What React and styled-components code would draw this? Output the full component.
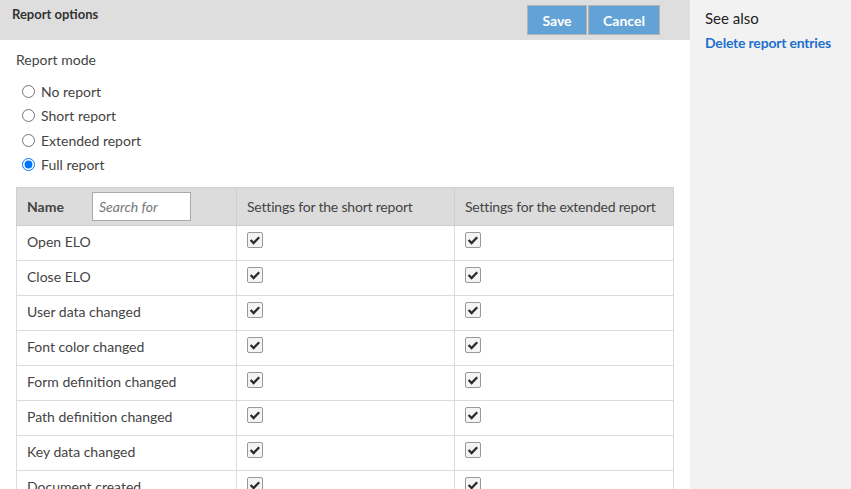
import React from 'react';
import styled, { createGlobalStyle } from 'styled-components';

const GlobalStyle = createGlobalStyle`
    body {
        margin: 0;
        font-family: Lato, "Open Sans", sans-serif;
        color: #333;
        overflow: hidden;
    }
`;

const Page = styled.div`
    display: flex;
    width: 851px;
    height: 489px;
    overflow: hidden;
`;

const Main = styled.div`
    width: 690px;
    flex-shrink: 0;
    background: #fff;
`;

const Header = styled.div`
    height: 40px;
    background: #dedede;
    display: flex;
    justify-content: space-between;
    align-items: flex-start;
    padding: 0 30px 0 12px;
`;

const Title = styled.div`
    font-size: 13px;
    font-weight: bold;
    color: #333;
    padding-top: 6px;
`;

const Buttons = styled.div`
    display: flex;
    gap: 1px;
    padding-top: 5px;
`;

const Button = styled.button`
    height: 30px;
    width: ${(p) => p.w}px;
    background: #62a2d6;
    border: 1px solid #b3b3b3;
    color: #fff;
    font-family: Lato, sans-serif;
    font-weight: bold;
    font-size: 14px;
    padding: 0;
`;

const Content = styled.div`
    padding: 11px 17px 0 16px;
`;

const Label = styled.div`
    font-size: 14px;
    color: #444;
    margin-bottom: 14px;
`;

const RadioList = styled.div`
    display: flex;
    flex-direction: column;
    gap: 6px;
    padding-left: 6px;
    margin-bottom: 13px;
`;

const RadioRow = styled.label`
    display: flex;
    align-items: center;
    gap: 6px;
    font-size: 14px;
    color: #444;
    height: 18.5px;

    input {
        margin: 0;
        width: 13px;
        height: 13px;
    }
`;

const Table = styled.table`
    width: 657px;
    table-layout: fixed;
    border-collapse: collapse;
    font-size: 14px;
    color: #444;
`;

const Th = styled.th`
    background: #dcdcdc;
    border: 1px solid #cfcfcf;
    height: 37px;
    padding: 0 10px;
    text-align: left;
    white-space: nowrap;
    overflow: hidden;
    font-weight: ${(p) => (p.bold ? 'bold' : 'normal')};
    letter-spacing: ${(p) => (p.tight ? '-0.2px' : 'normal')};
`;

const NameHead = styled.div`
    display: flex;
    align-items: center;
`;

const Search = styled.input`
    width: 99px;
    height: 29px;
    box-sizing: border-box;
    border: 1px solid #aaa;
    padding: 0 6px;
    font-family: Lato, sans-serif;
    font-size: 14px;
    margin-left: auto;
    margin-right: 35px;

    &::placeholder {
        font-style: italic;
        color: #777;
    }
`;

const Td = styled.td`
    border: 1px solid #dcdcdc;
    height: 34px;
    padding: 0 10px;
    vertical-align: top;
    line-height: 32px;
`;

const Box = styled.span`
    display: inline-block;
    width: 16px;
    height: 16px;
    box-sizing: border-box;
    border: 1px solid #999;
    border-radius: 2px;
    background: #f4f4f4;
    margin-top: 6px;
    vertical-align: top;

    svg {
        display: block;
    }
`;

const Sidebar = styled.div`
    flex: 1;
    background: #f2f2f2;
    padding: 9px 15px;
`;

const SeeAlso = styled.div`
    font-size: 15px;
    color: #222;
    margin-bottom: 5px;
`;

const SideLink = styled.a`
    font-size: 14px;
    font-weight: bold;
    color: #1f6fcc;
    text-decoration: none;
    letter-spacing: -0.2px;
`;

const Check = () => (
    <Box>
        <svg width="14" height="14" viewBox="0 0 14 14">
            <path d="M2.6 7 L5.6 10 L11.2 4.2" fill="none" stroke="#2b2b2b" strokeWidth="2.3" />
        </svg>
    </Box>
);

const rows = [
    'Open ELO',
    'Close ELO',
    'User data changed',
    'Font color changed',
    'Form definition changed',
    'Path definition changed',
    'Key data changed',
    'Document created',
    'Document deleted',
];

const modes = ['No report', 'Short report', 'Extended report', 'Full report'];

export default function App() {
    return (
        <Page>
            <GlobalStyle />
            <Main>
                <Header>
                    <Title>Report options</Title>
                    <Buttons>
                        <Button w={60}>Save</Button>
                        <Button w={72}>Cancel</Button>
                    </Buttons>
                </Header>
                <Content>
                    <Label>Report mode</Label>
                    <RadioList>
                        {modes.map((m, i) => (
                            <RadioRow key={m}>
                                <input type="radio" name="mode" defaultChecked={i === 3} />
                                {m}
                            </RadioRow>
                        ))}
                    </RadioList>
                    <Table>
                        <colgroup>
                            <col style={{ width: 220 }} />
                            <col style={{ width: 218 }} />
                            <col style={{ width: 219 }} />
                        </colgroup>
                        <thead>
                            <tr>
                                <Th bold>
                                    <NameHead>
                                        Name
                                        <Search placeholder="Search for" />
                                    </NameHead>
                                </Th>
                                <Th tight>Settings for the short report</Th>
                                <Th tight>Settings for the extended report</Th>
                            </tr>
                        </thead>
                        <tbody>
                            {rows.map((r) => (
                                <tr key={r}>
                                    <Td>{r}</Td>
                                    <Td><Check /></Td>
                                    <Td><Check /></Td>
                                </tr>
                            ))}
                        </tbody>
                    </Table>
                </Content>
            </Main>
            <Sidebar>
                <SeeAlso>See also</SeeAlso>
                <SideLink href="#">Delete report entries</SideLink>
            </Sidebar>
        </Page>
    );
}
